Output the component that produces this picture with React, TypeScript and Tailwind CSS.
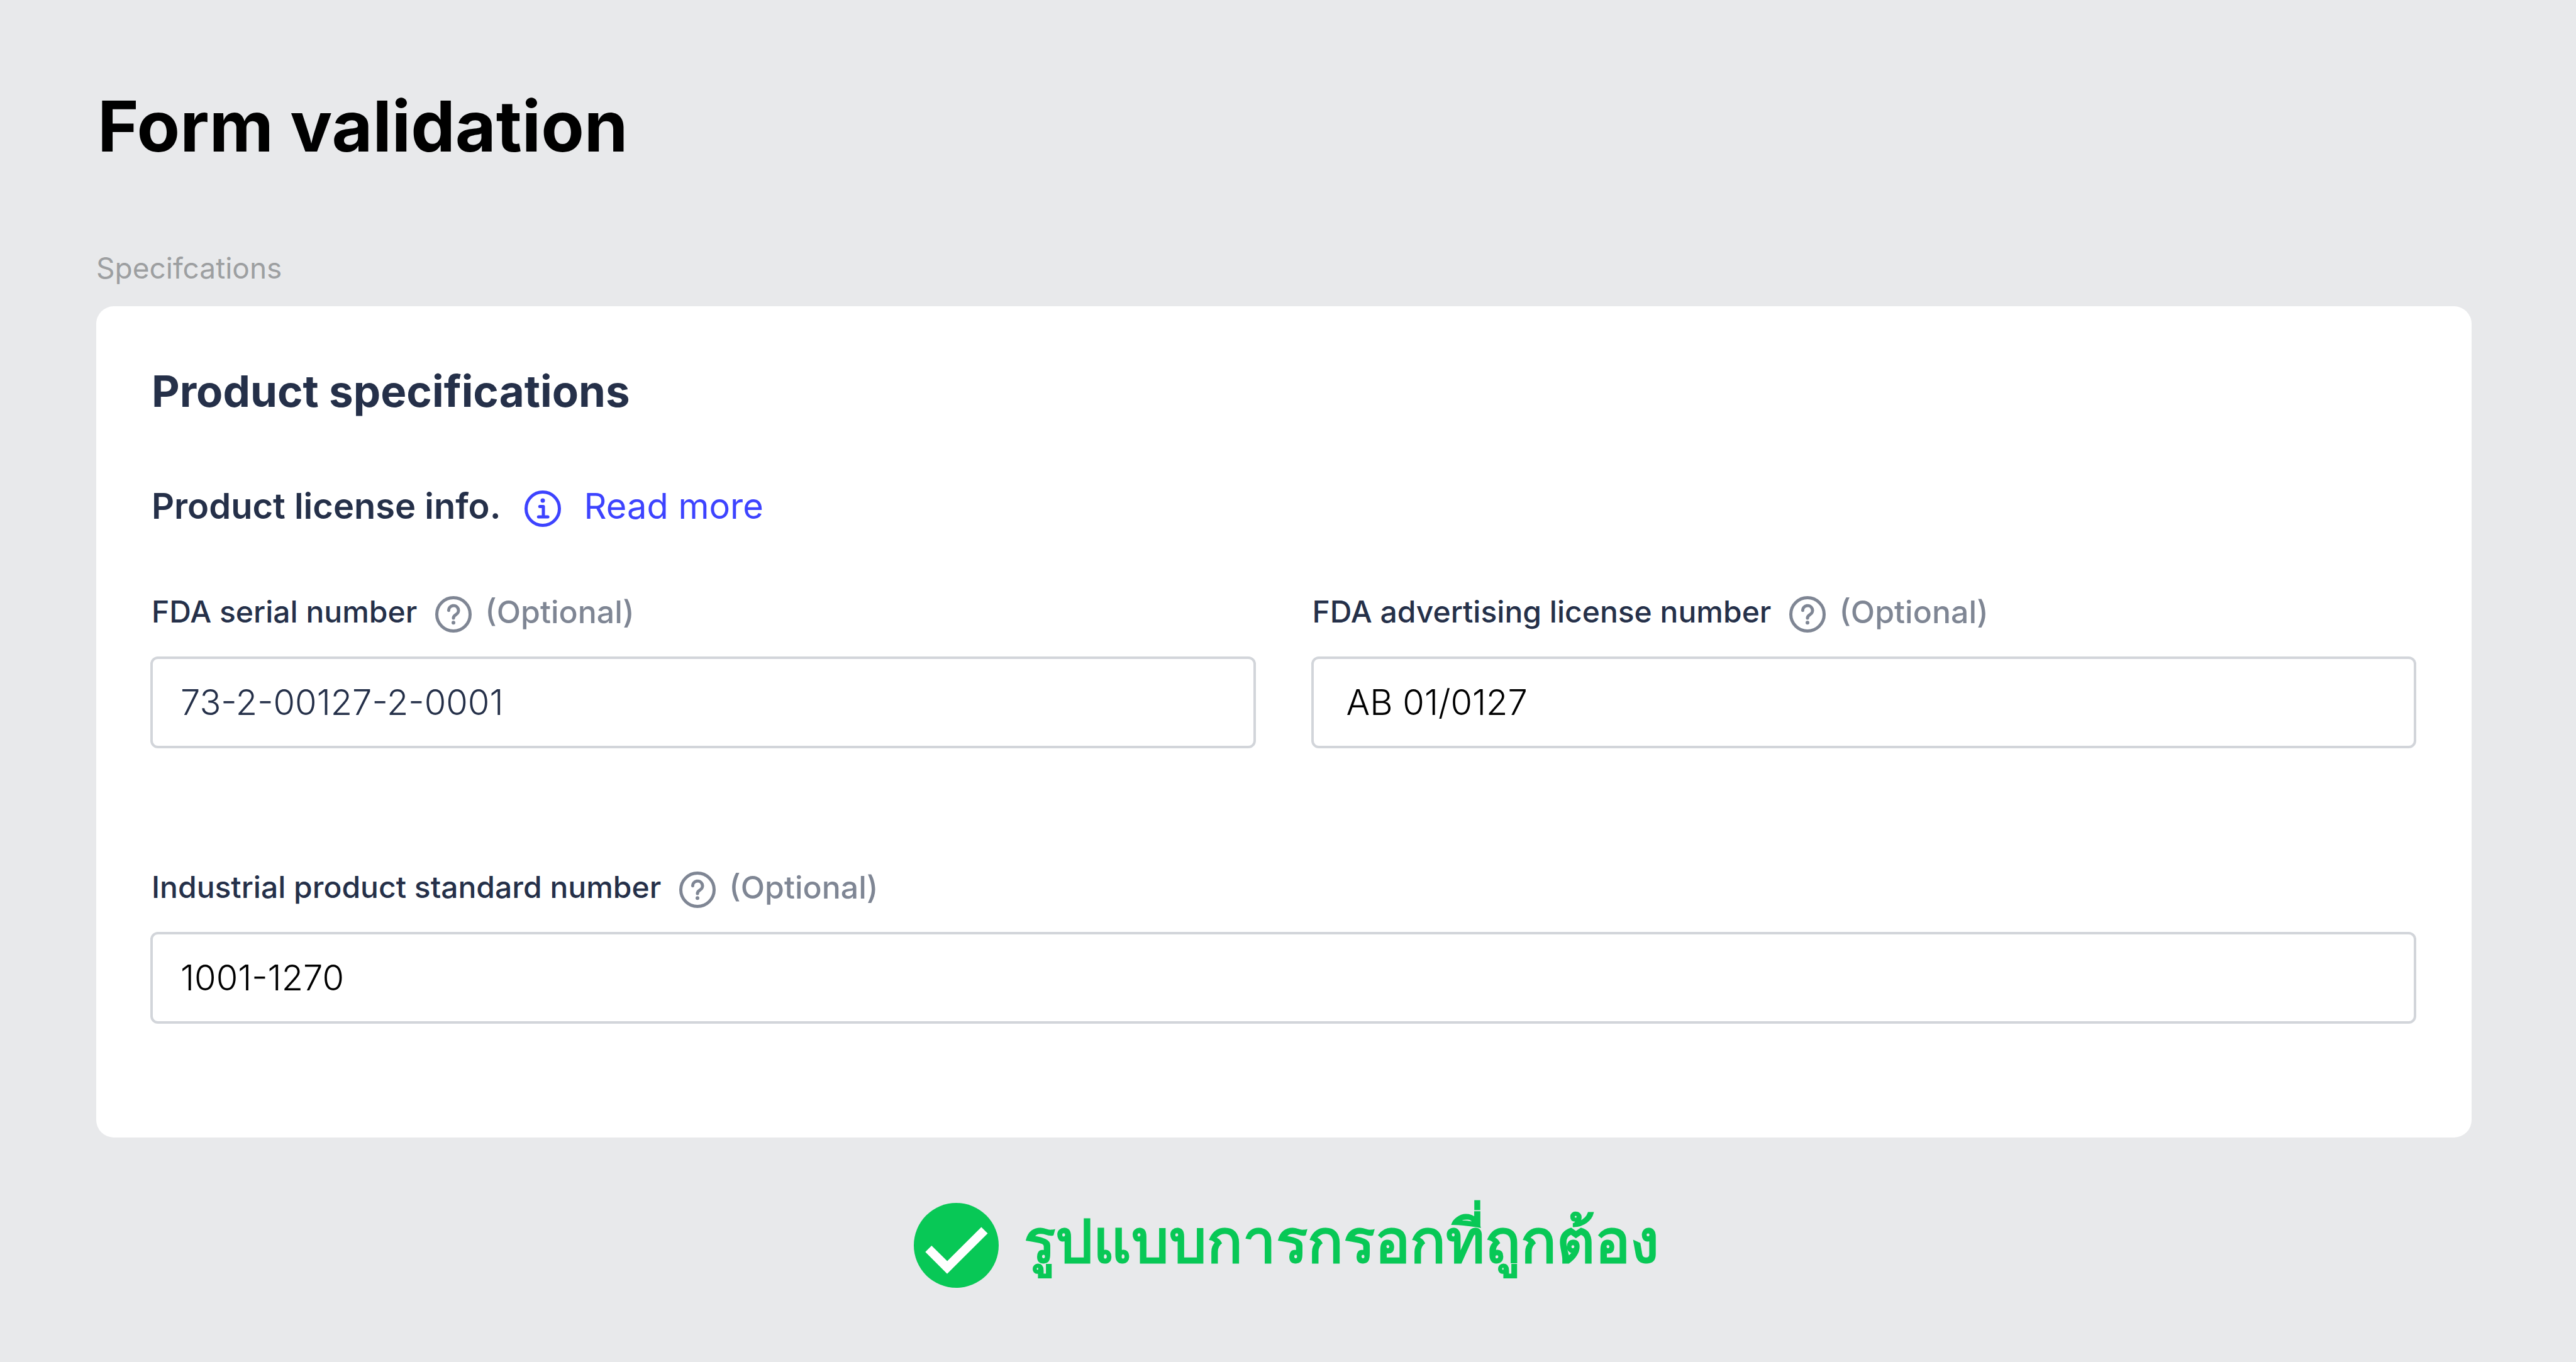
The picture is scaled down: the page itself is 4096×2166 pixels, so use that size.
import { useState } from "react";

function InfoIcon() {
  return (
    <svg
      viewBox="0 0 60 60"
      className="mt-2 size-[60px] shrink-0"
      fill="none"
      stroke="currentColor"
      strokeWidth="5"
      strokeLinecap="round"
      strokeLinejoin="round"
    >
      <circle cx="30" cy="30" r="26.5" />
      <path d="M25.3 26.5h5.7v16.4M23.3 43h14.8" />
      <circle cx="30" cy="17" r="3.5" fill="currentColor" stroke="none" />
    </svg>
  );
}

function HelpIcon() {
  return (
    <svg
      viewBox="0 0 60 60"
      className="size-[60px]"
      fill="none"
      stroke="currentColor"
      strokeWidth="5"
      strokeLinecap="round"
      strokeLinejoin="round"
    >
      <circle cx="30" cy="30" r="26.5" />
      <path d="M22.4 23.8a7.8 7.6 0 1 1 11.6 6.6C31.3 32 30 33 30 36" />
      <circle cx="30" cy="43.3" r="3" fill="currentColor" stroke="none" />
    </svg>
  );
}

function CheckIcon() {
  return (
    <svg viewBox="0 0 135 135" className="size-[135px] shrink-0">
      <circle cx="67.5" cy="67.5" r="67.5" fill="#08c856" />
      <path
        d="M18.3 78 28.3 68 53.2 92.6 107.4 38.4 117.5 48.5 53 112.8Z"
        fill="#fff"
      />
    </svg>
  );
}

type FieldProps = {
  name: string;
  label: string;
  value: string;
  onChange: (e: React.ChangeEvent<HTMLInputElement>) => void;
  inputClass: string;
};

function Field({ name, label, value, onChange, inputClass }: FieldProps) {
  return (
    <div>
      <div className="flex items-center pl-0.5">
        <label
          htmlFor={name}
          className="text-[48px] leading-[56px] font-medium whitespace-nowrap"
        >
          {label}
        </label>
        <button
          type="button"
          aria-label={`Help: ${label}`}
          className="mt-2 ml-7 text-[#7f8694]"
        >
          <HelpIcon />
        </button>
        <span className="ml-5 text-[50px] leading-[56px] font-medium text-[#7f8694]">
          (Optional)
        </span>
      </div>
      <input
        id={name}
        name={name}
        type="text"
        value={value}
        onChange={onChange}
        className={`mt-[37px] block h-[146px] w-full rounded-xl border-4 border-[#d2d5da] bg-white text-[56px] font-light outline-none ${inputClass}`}
      />
    </div>
  );
}

export default function App() {
  const [formData, setFormData] = useState({
    fdaSerial: "73-2-00127-2-0001",
    fdaAdvertising: "AB 01/0127",
    industrialStandard: "1001-1270",
  });

  const handleChange = (e: React.ChangeEvent<HTMLInputElement>) => {
    const { name, value } = e.target;
    setFormData((prev) => ({ ...prev, [name]: value }));
  };

  return (
    <main className="min-h-screen bg-[#e8e9eb] pt-[136px] pr-[166px] pb-16 pl-[153px] font-['Inter',sans-serif]">
      <h1 className="pl-0.5 text-[112px] leading-[128px] font-bold text-black">
        Form validation
      </h1>
      <p className="mt-[134px] text-[46px] leading-[56px] text-[#9d9fa1]">
        Specifcations
      </p>

      <form className="mt-[33px] rounded-[28px] bg-white pt-[95px] pr-[88px] pb-[181px] pl-[86px] text-[#253049]">
        <h2 className="pl-0.5 text-[69px] leading-[80px] font-bold">
          Product specifications
        </h2>
        <div className="mt-[109px] flex items-center pl-0.5 text-[56px] leading-[64px]">
          <h3 className="font-semibold">Product license info.</h3>
          <a href="#" className="ml-9 flex items-center gap-9 text-[#3d43ff]">
            <InfoIcon />
            Read more
          </a>
        </div>

        <div className="mt-[100px] grid grid-cols-2 gap-x-[88px] gap-y-[187px]">
          <Field
            name="fdaSerial"
            label="FDA serial number"
            value={formData.fdaSerial}
            onChange={handleChange}
            inputClass="px-11"
          />
          <Field
            name="fdaAdvertising"
            label="FDA advertising license number"
            value={formData.fdaAdvertising}
            onChange={handleChange}
            inputClass="px-13 text-black"
          />
          <div className="col-span-2">
            <Field
              name="industrialStandard"
              label="Industrial product standard number"
              value={formData.industrialStandard}
              onChange={handleChange}
              inputClass="px-11 text-black"
            />
          </div>
        </div>
      </form>

      <div className="mt-[104px] flex items-center justify-center gap-10 pl-2 text-[#08c856]">
        <CheckIcon />
        <p
          lang="th"
          className="pb-4 text-[94px] leading-[118px] font-bold whitespace-nowrap"
        >
          รูปแบบการกรอกที่ถูกต้อง
        </p>
      </div>
    </main>
  );
}
